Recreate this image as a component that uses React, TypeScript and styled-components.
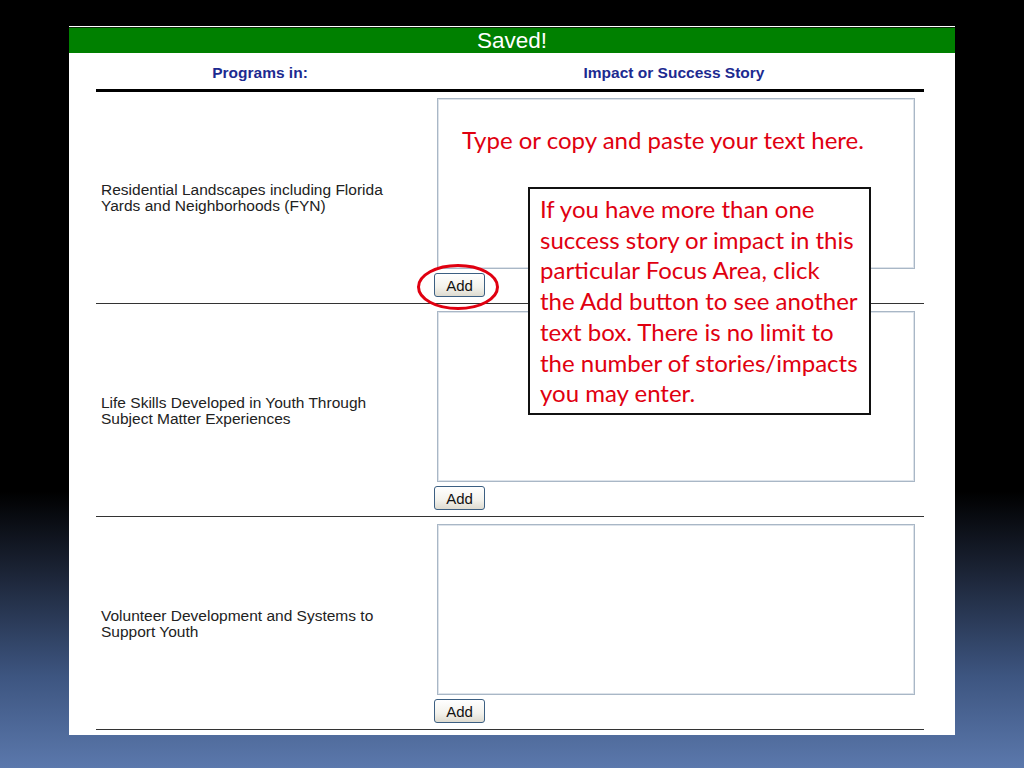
import React from "react";
import styled, { createGlobalStyle } from "styled-components";

const GlobalStyle = createGlobalStyle`
  html, body { margin: 0; padding: 0; }
  body {
    width: 1024px;
    height: 768px;
    overflow: hidden;
    background: linear-gradient(to bottom, #000 0%, #000 64%, #1a2233 74%, #3d5580 88%, #5b78ac 100%);
    font-family: "Liberation Sans", Arial, sans-serif;
  }
`;

const Stage = styled.div`
  width: 1024px;
  height: 768px;
  padding: 26px 0 0 69px;
  box-sizing: border-box;
`;

const Panel = styled.div`
  position: relative;
  width: 886px;
  height: 709px;
  background: #fff;
  padding-top: 1px;
  box-sizing: border-box;
`;

const SavedBar = styled.div`
  height: 25px;
  border-top: 1px solid #0a2a0a;
  background: #008000;
  color: #fff;
  font-size: 22.5px;
  line-height: 25px;
  text-align: center;
`;

const Table = styled.div`
  margin: 0 31px 0 27px;
`;

const HeaderRow = styled.div`
  display: grid;
  grid-template-columns: 328px 500px;
  height: 39px;
  border-bottom: 3px solid #000;
  align-items: center;
  color: #1c2a90;
  font-weight: bold;
  font-size: 15.5px;
  text-align: center;
  padding-top: 3px;
  box-sizing: border-box;
`;

const Row = styled.div`
  display: grid;
  grid-template-columns: 328px 500px;
  padding: 7px 0 6px;
  border-bottom: 1px solid #333;
  &:first-child { padding-top: 6px; }
`;

const Label = styled.div`
  align-self: center;
  padding-left: 5px;
  font-size: 15.5px;
  line-height: 16px;
  color: #222;
`;

const Entry = styled.div`
  display: flex;
  flex-direction: column;
  align-items: flex-start;
  gap: 4px;
`;

const StoryBox = styled.textarea`
  display: block;
  width: 478px;
  height: 171px;
  margin-left: 13px;
  border: 1px solid #a9b7c6;
  box-shadow: inset 0 0 0 1px #dde3ea;
  background: #fff;
  resize: none;
  box-sizing: border-box;
  outline: none;
`;

const AddButton = styled.button`
  margin-left: 10px;
  width: 51px;
  height: 24px;
  padding: 0;
  border: 1px solid #3c5f82;
  border-radius: 3px;
  background: linear-gradient(to bottom, #ffffff 0%, #f3f2ec 60%, #dedbd0 100%);
  font-family: "Liberation Sans", Arial, sans-serif;
  font-size: 15px;
  color: #111;
`;

const Hint = styled.div`
  position: absolute;
  left: 393px;
  top: 99px;
  font-family: Lato, "Open Sans", sans-serif;
  font-size: 24px;
  line-height: 30px;
  color: #e00010;
  white-space: nowrap;
`;

const Callout = styled.div`
  position: absolute;
  left: 459px;
  top: 161px;
  width: 343px;
  height: 228px;
  box-sizing: border-box;
  border: 2px solid #111;
  background: #fff;
  padding: 5px 0 0 10px;
  font-family: Lato, "Open Sans", sans-serif;
  font-size: 24px;
  line-height: 30.7px;
  color: #e00010;
  white-space: nowrap;
`;

const Ring = styled.svg`
  position: absolute;
  left: 347px;
  top: 237px;
`;

const rows = [
  ["Residential Landscapes including Florida", "Yards and Neighborhoods (FYN)"],
  ["Life Skills Developed in Youth Through", "Subject Matter Experiences"],
  ["Volunteer Development and Systems to", "Support Youth"],
];

const calloutLines = [
  "If you have more than one",
  "success story or impact in this",
  "particular Focus Area, click",
  "the Add button to see another",
  "text box. There is no limit to",
  "the number of stories/impacts",
  "you may enter.",
];

export default function App() {
  return (
    <>
      <GlobalStyle />
      <Stage>
        <Panel>
          <SavedBar>Saved!</SavedBar>
          <Table>
            <HeaderRow>
              <div>Programs in:</div>
              <div>Impact or Success Story</div>
            </HeaderRow>
            <div>
              {rows.map((r, i) => (
                <Row key={i}>
                  <Label>
                    {r[0]}
                    <br />
                    {r[1]}
                  </Label>
                  <Entry>
                    <StoryBox />
                    <AddButton>Add</AddButton>
                  </Entry>
                </Row>
              ))}
            </div>
          </Table>
          <Hint>Type or copy and paste your text here.</Hint>
          <Callout>
            {calloutLines.map((l, i) => (
              <div key={i}>{l}</div>
            ))}
          </Callout>
          <Ring width="84" height="48" viewBox="0 0 84 48">
            <ellipse cx="42" cy="24" rx="39.5" ry="21.5" fill="none" stroke="#e00010" strokeWidth="3" />
          </Ring>
        </Panel>
      </Stage>
    </>
  );
}
